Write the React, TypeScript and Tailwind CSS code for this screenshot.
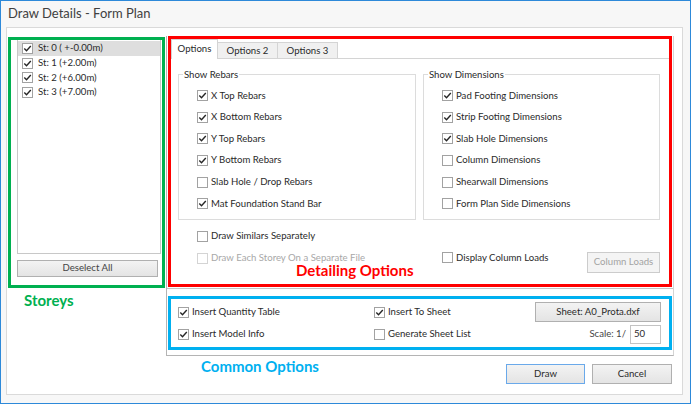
import type { ReactNode } from 'react'

const STOREYS = ['St: 0 ( +-0.00m)', 'St: 1 (+2.00m)', 'St: 2 (+6.00m)', 'St: 3 (+7.00m)']

const REBARS = [
  { label: 'X Top Rebars', checked: true },
  { label: 'X Bottom Rebars', checked: true },
  { label: 'Y Top Rebars', checked: true },
  { label: 'Y Bottom Rebars', checked: true },
  { label: 'Slab Hole / Drop Rebars', checked: false },
  { label: 'Mat Foundation Stand Bar', checked: true },
]

const DIMENSIONS = [
  { label: 'Pad Footing Dimensions', checked: true },
  { label: 'Strip Footing Dimensions', checked: true },
  { label: 'Slab Hole Dimensions', checked: true },
  { label: 'Column Dimensions', checked: false },
  { label: 'Shearwall Dimensions', checked: false },
  { label: 'Form Plan Side Dimensions', checked: false },
]

function Box({ checked, disabled }: { checked?: boolean; disabled?: boolean }) {
  return (
    <span
      className={`flex h-[11px] w-[11px] shrink-0 items-center justify-center border bg-white ${
        disabled ? 'border-[#d4d4d4]' : 'border-[#a2a2a2]'
      }`}
    >
      {checked && (
        <svg width="9" height="9" viewBox="0 0 9 9">
          <path d="M1.3 4.6 L3.5 6.8 L7.8 2" fill="none" stroke="#262626" strokeWidth="1.4" />
        </svg>
      )}
    </span>
  )
}

function CheckRow({
  label,
  checked,
  disabled,
  className = '',
}: {
  label: string
  checked?: boolean
  disabled?: boolean
  className?: string
}) {
  return (
    <div className={`flex items-center gap-[3px] ${className}`}>
      <Box checked={checked} disabled={disabled} />
      <span className={disabled ? 'text-[#a8a8a8]' : 'text-[#2a2a2a]'}>{label}</span>
    </div>
  )
}

function WinButton({
  children,
  className = '',
  disabled,
  primary,
}: {
  children: ReactNode
  className?: string
  disabled?: boolean
  primary?: boolean
}) {
  const tone = disabled
    ? 'border-[#cccccc] bg-[#f4f4f4] text-[#a3a3a3]'
    : primary
      ? 'border-[#6aa9ea] bg-gradient-to-b from-[#f3f3f3] to-[#e4e4e4] text-[#2a2a2a]'
      : 'border-[#b0b0b0] bg-gradient-to-b from-[#f3f3f3] to-[#e4e4e4] text-[#2a2a2a]'
  return (
    <button type="button" className={`flex items-center justify-center border ${tone} ${className}`}>
      {children}
    </button>
  )
}

function Group({ title, items }: { title: string; items: { label: string; checked: boolean }[] }) {
  return (
    <fieldset className="h-[152px] border border-[#dcdcdc]">
      <legend className="ml-[4px] px-[1px] leading-[13px] text-[#2a2a2a]">{title}</legend>
      <div className="mt-[4px] flex flex-col pl-[18px]">
        {items.map((it) => (
          <CheckRow key={it.label} label={it.label} checked={it.checked} className="h-[21.6px]" />
        ))}
      </div>
    </fieldset>
  )
}

export default function App() {
  return (
    <div className="flex h-[404px] w-[691px] flex-col border border-[#2d89d9] bg-[#f7f7f7] font-['Lato','Segoe_UI',sans-serif] text-[9.6px]">
      {/* title bar */}
      <div className="flex h-[26px] shrink-0 items-center pl-[7px] text-[13px] text-[#404040]">
        Draw Details - Form Plan
      </div>

      <div className="ml-[5px] flex h-[368px] w-[677px] border border-[#dadada] bg-white pl-[1px] pt-[8px]">
        {/* storeys */}
        <div className="flex w-[157px] flex-col">
          <div className="mt-[1px] flex h-[251px] flex-col border-[3px] border-[#00b050] pl-[6px] pr-[1px]">
            <div className="h-[214px] border-x border-b border-[#c8c8c8] bg-white pt-[1px]">
              {STOREYS.map((s, i) => (
                <div
                  key={s}
                  className={`flex h-[14.7px] items-center gap-[5px] pl-[4px] ${i === 0 ? 'bg-[#dedede]' : ''}`}
                >
                  <Box checked />
                  <span className="text-[#2a2a2a]">{s}</span>
                </div>
              ))}
            </div>
            <WinButton className="mt-[6px] h-[17px] w-[141px] text-[#444]">Deselect All</WinButton>
          </div>
          <div className="ml-[16px] mt-[3px] text-[15px] font-bold leading-[18px] text-[#00b050]">Storeys</div>
        </div>

        {/* options */}
        <div className="ml-[1px] flex w-[508px] flex-col">
          <div className="flex flex-col border-x border-b border-l-[#b4b4b4] border-r-[#d4d4d4] border-b-[#b4b4b4]">
            <div className="h-[253px] border-b border-[#c4c4c4]">
              <div className="relative ml-[1px] flex h-[251px] w-[504px] flex-col border-[3px] border-[#ff0000]">
                <div className="flex h-[20px] items-end">
                  <div className="relative z-10 flex h-[20px] w-[47px] items-center justify-center border-x border-t border-[#d4d4d4] bg-white text-[#2a2a2a]">
                    Options
                  </div>
                  <div className="flex h-[17px] w-[60px] items-center justify-center border-r border-t border-[#d4d4d4] bg-[#f0f0f0] text-[#2a2a2a]">
                    Options 2
                  </div>
                  <div className="flex h-[17px] w-[60px] items-center justify-center border-r border-t border-[#d4d4d4] bg-[#f0f0f0] text-[#2a2a2a]">
                    Options 3
                  </div>
                </div>
                <div className="-mt-px flex-1 border-t border-[#d4d4d4] bg-white pl-[7px] pt-[9px]">
                  <div className="grid grid-cols-[238px_237px] gap-x-[7px]">
                    <div className="flex flex-col">
                      <Group title="Show Rebars" items={REBARS} />
                      <CheckRow label="Draw Similars Separately" className="ml-[19px] mt-[5px] h-[22px]" />
                      <CheckRow label="Draw Each Storey On a Separate File" disabled className="ml-[19px] h-[22px]" />
                    </div>
                    <div className="flex flex-col">
                      <Group title="Show Dimensions" items={DIMENSIONS} />
                      <div className="ml-[19px] mt-[27px] flex h-[22px] items-center justify-between">
                        <CheckRow label="Display Column Loads" />
                        <WinButton disabled className="mt-[8px] h-[21px] w-[73px]">
                          Column Loads
                        </WinButton>
                      </div>
                    </div>
                  </div>
                </div>
                <div className="absolute left-[125px] top-[222px] text-[15px] font-bold leading-[18px] text-[#ff0000]">
                  Detailing Options
                </div>
              </div>
            </div>

            <div className="pb-[5px] pt-[7px]">
              <div className="ml-[1px] grid h-[54px] w-[504px] grid-cols-[196px_1fr_auto] content-center border-[3px] border-[#00b0f0] pl-[7px] pr-[8px]">
                <CheckRow label="Insert Quantity Table" checked className="h-[22px]" />
                <CheckRow label="Insert To Sheet" checked className="h-[22px]" />
                <div className="flex h-[22px] items-center justify-end">
                  <WinButton className="h-[20px] w-[126px]">Sheet: A0_Prota.dxf</WinButton>
                </div>
                <CheckRow label="Insert Model Info" checked className="h-[22px]" />
                <CheckRow label="Generate Sheet List" className="h-[22px]" />
                <div className="flex h-[22px] items-center justify-end gap-[4px]">
                  <span className="text-[#444]">Scale: 1/</span>
                  <div className="flex h-[19px] w-[31px] items-center border border-[#c3c3c3] bg-white pl-[3px] text-[#2a2a2a]">
                    50
                  </div>
                </div>
              </div>
            </div>
          </div>

          <div className="flex items-start justify-between">
            <div className="ml-[35px] mt-[1px] text-[15px] font-bold leading-[18px] text-[#00b0f0]">Common Options</div>
            <div className="mr-[2px] mt-[8px] flex gap-[7px]">
              <WinButton primary className="h-[20px] w-[79px]">
                Draw
              </WinButton>
              <WinButton className="h-[20px] w-[80px]">Cancel</WinButton>
            </div>
          </div>
        </div>
      </div>
    </div>
  )
}
